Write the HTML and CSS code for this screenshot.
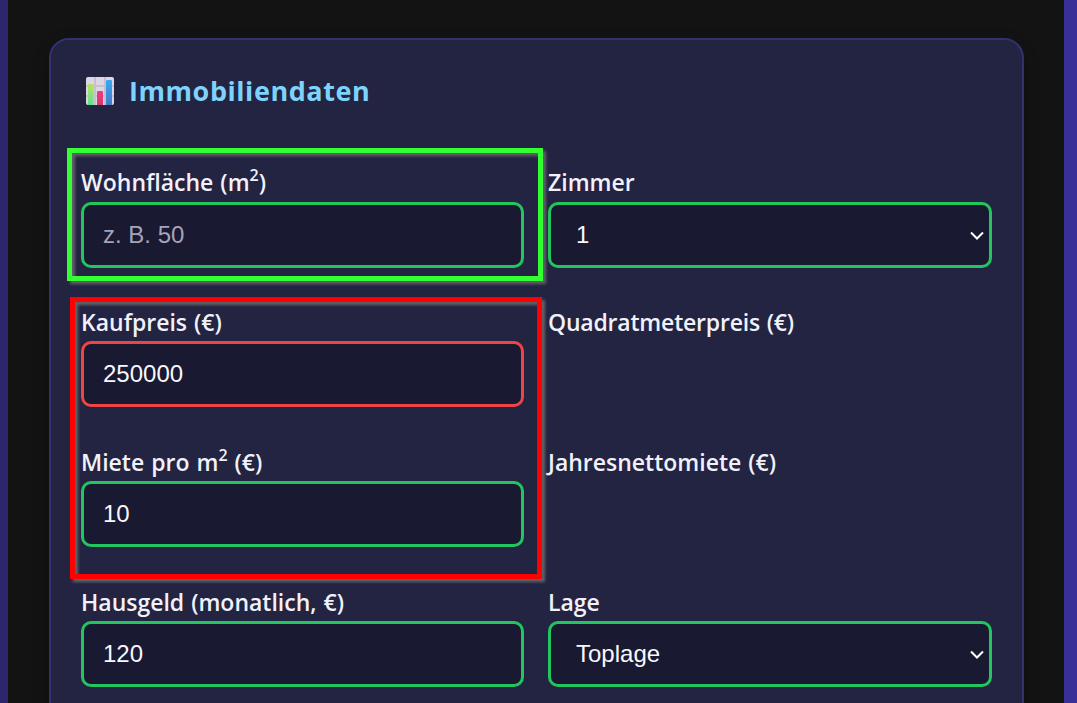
FILE: index.html
```html
<!DOCTYPE html>
<html lang="de">
<head>
<meta charset="utf-8">
<title>Immobiliendaten</title>
<link rel="stylesheet" href="styles.css">
</head>
<body>
<main class="page">
<section class="card">
<h2 class="title">
<svg class="title-icon" viewBox="0 0 28 28" aria-hidden="true">
<defs>
<linearGradient id="green" x1="0" y1="0" x2="0" y2="1"><stop offset="0" stop-color="#b4e264"/><stop offset="1" stop-color="#5fe08c"/></linearGradient>
<linearGradient id="pink" x1="0" y1="0" x2="0" y2="1"><stop offset="0" stop-color="#f03a86"/><stop offset="1" stop-color="#d83868"/></linearGradient>
<linearGradient id="blue" x1="0" y1="0" x2="0" y2="1"><stop offset="0" stop-color="#39a8f6"/><stop offset="1" stop-color="#447bc9"/></linearGradient>
</defs>
<rect width="28" height="28" rx="2" fill="#dcd6e4"/>
<path d="M9 0v28M19 0v28M0 9h28M0 19h28" stroke="#c6bfcd" stroke-width="2"/>
<path d="M2 7h4.500a1 1 0 0 1 1 1v20H2z" fill="url(#green)"/>
<path d="M11 15a1 1 0 0 1 1-1h4a1 1 0 0 1 1 1v13h-6z" fill="url(#pink)"/>
<path d="M20 4a1 1 0 0 1 1-1h4a1 1 0 0 1 1 1v24h-6z" fill="url(#blue)"/>
</svg>
<span class="title-text">Immobiliendaten</span>
</h2>
<form class="fields">
<div class="field"><label class="label" for="area"><span>Wohnfläche (m<sup>2</sup>)</span></label><input class="control" id="area" placeholder="z. B. 50"></div>
<div class="field"><label class="label" for="rooms"><span>Zimmer</span></label><div class="select"><select class="control" id="rooms"><option>1</option></select><svg class="chevron" viewBox="0 0 14 9"><path d="M1 1.500l6 6 6-6"/></svg></div></div>
<div class="field"><label class="label" for="price"><span>Kaufpreis (€)</span></label><input class="control invalid" id="price" value="250000"></div>
<div class="field"><span class="label label-tight"><span>Quadratmeterpreis (€)</span></span></div>
<div class="field"><label class="label" for="rent"><span>Miete pro m<sup>2</sup> (€)</span></label><input class="control" id="rent" value="10"></div>
<div class="field"><span class="label"><span>Jahresnettomiete (€)</span></span></div>
<div class="field"><label class="label" for="fee"><span>Hausgeld (monatlich, €)</span></label><input class="control" id="fee" value="120"></div>
<div class="field"><label class="label" for="location"><span>Lage</span></label><div class="select"><select class="control" id="location"><option>Toplage</option></select><svg class="chevron" viewBox="0 0 14 9"><path d="M1 1.500l6 6 6-6"/></svg></div></div>
</form>
</section>
</main>
<div class="marker marker-green"></div>
<div class="marker marker-red"></div>
</body>
</html>
```
FILE: styles.css
```css
* { box-sizing: border-box; }
html, body { height: 100%; margin: 0; overflow: hidden; }
body {
  padding: 0 13px 0 8px;
  background: linear-gradient(90deg, #2d266c, #392f98);
  font-family: "Segoe UI", "Open Sans", "Noto Sans", sans-serif;
  color: #f1f1fa;
}
.page { height: 703px; padding: 38px 40px 0 41px; background: #131313; overflow: hidden; }
.card {
  height: 720px;
  padding: 31px 30px;
  background: #232342;
  border: 2px solid #35306f;
  border-radius: 20px;
  box-shadow: 0 4px 16px rgba(0, 0, 0, .2);
}
.title { display: flex; align-items: center; gap: 15px; height: 40px; margin: 0 0 56px; padding-left: 5px; color: #7dd3fc; font-size: 27px; font-weight: 700; line-height: 40px; letter-spacing: .55px; }
.title-icon { width: 28px; height: 28px; }
.fields { display: grid; grid-template-columns: 443px 444px; grid-auto-rows: 140px; column-gap: 24px; }
.label { display: block; height: 35px; font-size: 23px; font-weight: 600; line-height: 30px; white-space: nowrap; word-spacing: 1px; }
.field:nth-child(n+3) .label { height: 34px; }
.label-tight { letter-spacing: -.2px; }
.label sup { font-size: 16px; line-height: 0; vertical-align: 10px; }
.control {
  display: block;
  width: 100%;
  height: 66px;
  margin: 0;
  padding: 0 19px;
  appearance: none;
  background: #191932;
  border: 3px solid #22c55e;
  border-radius: 10px;
  outline: 0;
  color: #f8f8ff;
  font: 24px "Liberation Sans", Arial, sans-serif;
}
.control::placeholder { color: #a4a3b8; opacity: 1; }
.invalid { border-color: #ef4444; }
.select { display: grid; align-items: center; }
.select > * { grid-area: 1 / 1; }
.select .control { padding: 0 25px 2px; }
.chevron { width: 14px; height: 9px; margin-right: 8px; justify-self: end; fill: none; stroke: #fff; stroke-width: 2; pointer-events: none; }
.marker { position: absolute; border: 5px solid; pointer-events: none; filter: drop-shadow(3px 3px 1.500px rgba(115, 115, 115, .8)); }
.marker-green { left: 67px; top: 148px; width: 476px; height: 133px; border-color: #33ff33; }
.marker-red { left: 70px; top: 297px; width: 472px; height: 282px; border-color: #ff0000; }
```
